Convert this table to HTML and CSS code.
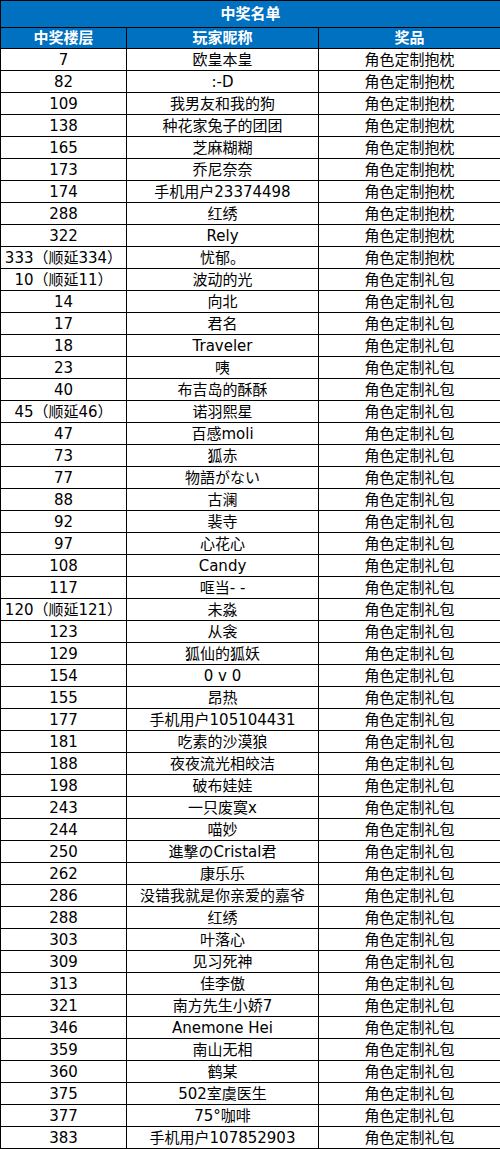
FILE: index.html
```html
<!DOCTYPE html>
<html lang="zh-CN">
<head>
<meta charset="utf-8">
<title>中奖名单</title>
<link rel="stylesheet" href="styles.css">
</head>
<body>
<table class="list">
<colgroup><col class="c1"><col class="c2"><col class="c3"></colgroup>
<thead>
<tr class="title"><th colspan="3">中奖名单</th></tr>
<tr class="head"><th>中奖楼层</th><th>玩家昵称</th><th>奖品</th></tr>
</thead>
<tbody>
<tr><td>7</td><td>欧皇本皇</td><td>角色定制抱枕</td></tr>
<tr><td>82</td><td>:-D</td><td>角色定制抱枕</td></tr>
<tr><td>109</td><td>我男友和我的狗</td><td>角色定制抱枕</td></tr>
<tr><td>138</td><td>种花家兔子的团团</td><td>角色定制抱枕</td></tr>
<tr><td>165</td><td>芝麻糊糊</td><td>角色定制抱枕</td></tr>
<tr><td>173</td><td>乔尼奈奈</td><td>角色定制抱枕</td></tr>
<tr><td>174</td><td>手机用户23374498</td><td>角色定制抱枕</td></tr>
<tr><td>288</td><td>红绣</td><td>角色定制抱枕</td></tr>
<tr><td>322</td><td>Rely</td><td>角色定制抱枕</td></tr>
<tr><td>333（顺延334）</td><td>忧郁。</td><td>角色定制抱枕</td></tr>
<tr><td>10（顺延11）</td><td>波动的光</td><td>角色定制礼包</td></tr>
<tr><td>14</td><td>向北</td><td>角色定制礼包</td></tr>
<tr><td>17</td><td>君名</td><td>角色定制礼包</td></tr>
<tr><td>18</td><td>Traveler</td><td>角色定制礼包</td></tr>
<tr><td>23</td><td>咦</td><td>角色定制礼包</td></tr>
<tr><td>40</td><td>布吉岛的酥酥</td><td>角色定制礼包</td></tr>
<tr><td>45（顺延46）</td><td>诺羽熙星</td><td>角色定制礼包</td></tr>
<tr><td>47</td><td>百感moli</td><td>角色定制礼包</td></tr>
<tr><td>73</td><td>狐赤</td><td>角色定制礼包</td></tr>
<tr><td>77</td><td>物語がない</td><td>角色定制礼包</td></tr>
<tr><td>88</td><td>古澜</td><td>角色定制礼包</td></tr>
<tr><td>92</td><td>裴寺</td><td>角色定制礼包</td></tr>
<tr><td>97</td><td>心花心</td><td>角色定制礼包</td></tr>
<tr><td>108</td><td>Candy</td><td>角色定制礼包</td></tr>
<tr><td>117</td><td>哐当- -</td><td>角色定制礼包</td></tr>
<tr><td>120（顺延121）</td><td>未淼</td><td>角色定制礼包</td></tr>
<tr><td>123</td><td>从衾</td><td>角色定制礼包</td></tr>
<tr><td>129</td><td>狐仙的狐妖</td><td>角色定制礼包</td></tr>
<tr><td>154</td><td>0 v 0</td><td>角色定制礼包</td></tr>
<tr><td>155</td><td>昂热</td><td>角色定制礼包</td></tr>
<tr><td>177</td><td>手机用户105104431</td><td>角色定制礼包</td></tr>
<tr><td>181</td><td>吃素的沙漠狼</td><td>角色定制礼包</td></tr>
<tr><td>188</td><td>夜夜流光相皎洁</td><td>角色定制礼包</td></tr>
<tr><td>198</td><td>破布娃娃</td><td>角色定制礼包</td></tr>
<tr><td>243</td><td>一只废寞x</td><td>角色定制礼包</td></tr>
<tr><td>244</td><td>喵妙</td><td>角色定制礼包</td></tr>
<tr><td>250</td><td>進撃のCristal君</td><td>角色定制礼包</td></tr>
<tr><td>262</td><td>康乐乐</td><td>角色定制礼包</td></tr>
<tr><td>286</td><td>没错我就是你亲爱的嘉爷</td><td>角色定制礼包</td></tr>
<tr><td>288</td><td>红绣</td><td>角色定制礼包</td></tr>
<tr><td>303</td><td>叶落心</td><td>角色定制礼包</td></tr>
<tr><td>309</td><td>见习死神</td><td>角色定制礼包</td></tr>
<tr><td>313</td><td>佳李傲</td><td>角色定制礼包</td></tr>
<tr><td>321</td><td>南方先生小娇7</td><td>角色定制礼包</td></tr>
<tr><td>346</td><td>Anemone Hei</td><td>角色定制礼包</td></tr>
<tr><td>359</td><td>南山无相</td><td>角色定制礼包</td></tr>
<tr><td>360</td><td>鹤某</td><td>角色定制礼包</td></tr>
<tr><td>375</td><td>502室虞医生</td><td>角色定制礼包</td></tr>
<tr><td>377</td><td>75°咖啡</td><td>角色定制礼包</td></tr>
<tr><td>383</td><td>手机用户107852903</td><td>角色定制礼包</td></tr>
</tbody>
</table>
</body>
</html>
```

FILE: styles.css
```css
html, body {
  margin: 0;
  padding: 0;
  background: #ffffff;
}
.list {
  width: 500px;
  border-collapse: collapse;
  table-layout: fixed;
  font-family: "DejaVu Sans", "Noto Sans CJK SC", sans-serif;
  font-size: 15px;
  color: #000000;
}
.c1 { width: 126px; }
.c2 { width: 192px; }
.c3 { width: 182px; }
.list th,
.list td {
  border: 1px solid #000000;
  padding: 0;
  text-align: center;
  white-space: nowrap;
  overflow: hidden;
  line-height: 20px;
}
.list td {
  height: 21px;
}
.list th {
  background: #0070c0;
  color: #ffffff;
  font-weight: bold;
}
.title th {
  height: 26px;
}
.head th {
  height: 20px;
}
```
